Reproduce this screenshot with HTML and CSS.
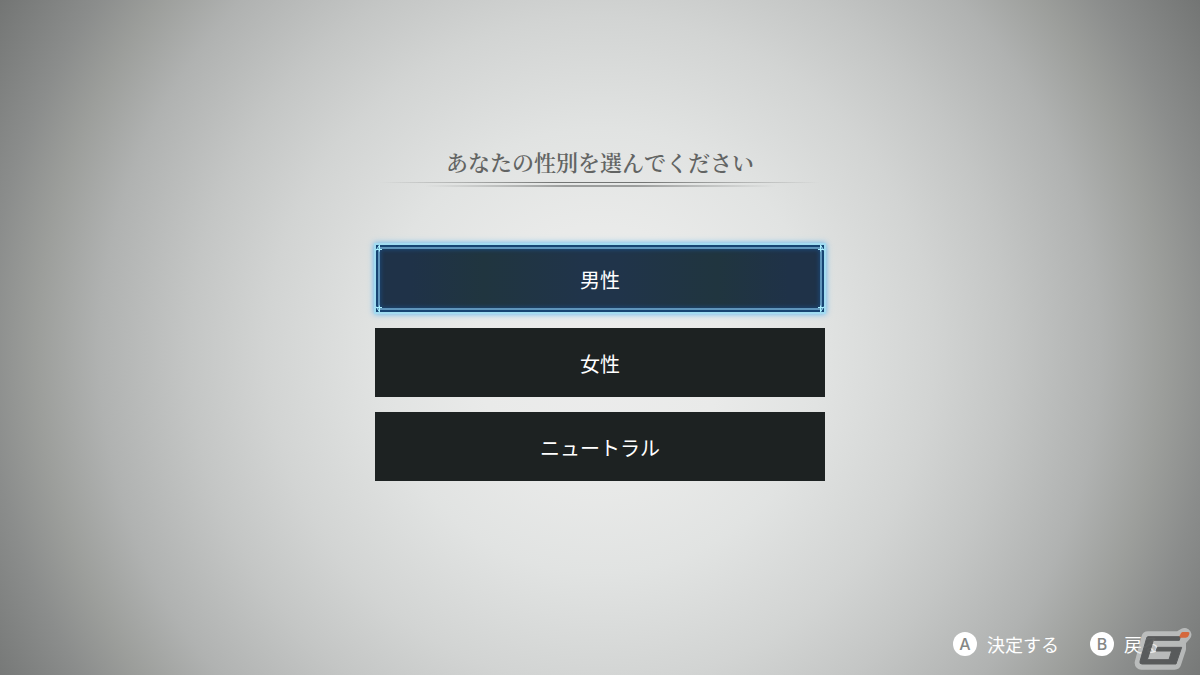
FILE: index.html
```html
<!doctype html>
<html lang="ja">
  <head>
    <meta charset="utf-8">
    <title>性別選択</title>
    <link rel="stylesheet" href="styles.css">
  </head>
  <body>
    <main id="select">
      <h1>あなたの性別を選んでください</h1>
      <div class="rule"></div>
      <div class="options">
        <button type="button" class="option selected">
          男性
          <svg class="corner tl" viewBox="0 0 8 8"><path d="M1 6.5L4.5 1V7.5M1 5.5H7"/></svg>
          <svg class="corner tr" viewBox="0 0 8 8"><path d="M1 6.5L4.5 1V7.5M1 5.5H7"/></svg>
          <svg class="corner bl" viewBox="0 0 8 8"><path d="M1 6.5L4.5 1V7.5M1 5.5H7"/></svg>
          <svg class="corner br" viewBox="0 0 8 8"><path d="M1 6.5L4.5 1V7.5M1 5.5H7"/></svg>
        </button>
        <button type="button" class="option">女性</button>
        <button type="button" class="option">ニュートラル</button>
      </div>
    </main>
    <footer>
      <button type="button" class="hint"><span class="key">A</span>決定する</button>
      <button type="button" class="hint"><span class="key">B</span>戻る</button>
    </footer>
    <svg class="mark" viewBox="0 0 240 165">
      <g opacity=".6">
        <path class="plate" d="M84 54H176L194 44L178 62V86L164 129H64z"/>
      </g>
      <path class="letter" d="M84 50H181L178 61H100L82 119H147L155 93H108L112 82H185L168 132H66Q58 132 60 124L80 54Q81 50 84 50z"/>
      <path class="dot" d="M188 36H204Q210 36 208 42L205 49Q203 53 197 53H184Q177 53 179 47L182 41Q184 36 188 36z"/>
    </svg>
  </body>
</html>
```

FILE: styles.css
```css
*,*:before,*:after {
  margin: 0;
  padding: 0;
  box-sizing: border-box;
}

body {
  position: relative;
  display: flex;
  flex-direction: column;
  min-height: 100vh;
  overflow: hidden;
  background: radial-gradient(circle farthest-corner at 50% 52%, #ececec 0%, #e9eae9 18%, #e1e3e2 32%, #d2d4d3 48%, #c4c6c5 59%, #b0b2b1 72%, #9c9e9b 81%, #8b8d8c 88%, #737574 100%);
  color: #fff;
  font-family: "Noto Sans CJK JP", sans-serif;
}

button {
  border: 0;
  background: none;
  color: inherit;
  font: inherit;
}

#select {
  flex: 1;
  display: flex;
  flex-direction: column;
  align-items: center;
  padding-top: 145px;
}

#select h1 {
  color: #626463;
  font-family: "Noto Serif CJK JP", "Noto Sans CJK JP", serif;
  font-size: 22px;
  font-weight: 600;
  line-height: 34px;
}

/* double line fading out at both ends */
.rule {
  width: 440px;
  height: 5px;
  margin: 3px 0 57px;
  background:
    linear-gradient(90deg, transparent, #737574 40%, #737574 60%, transparent) center top / 100% 1px no-repeat,
    linear-gradient(90deg, transparent, #9b9d9c 40%, #9b9d9c 60%, transparent) center bottom / 80% 2px no-repeat;
}

.options {
  display: grid;
  gap: 15px;
  width: 450px;
  max-width: 100%;
}

.option {
  position: relative;
  height: 69px;
  padding-top: 2px;
  background: #1d2222;
  font-size: 20px;
  line-height: 30px;
}

.option.selected {
  background: linear-gradient(90deg, #1f3248 8%, #20353f 24%, #20344a 46%, #20344a 54%, #20353f 76%, #1f3248 92%);
  box-shadow:
    0 0 0 1px #a5dcf2,
    0 0 6px 1px #5cb5ef,
    inset 0 0 0 1px #9fdcf0,
    inset 0 0 0 3px #164473,
    inset 0 0 0 5px #5f95bb,
    inset 0 0 4px 6px #1c4774;
}

.corner {
  position: absolute;
  width: 8px;
  height: 8px;
  fill: none;
  stroke: #a8f0ff;
}

.tl { top: 0; left: 0; }
.tr { top: 0; right: 0; transform: scaleX(-1); }
.bl { bottom: 0; left: 0; transform: scaleY(-1); }
.br { bottom: 0; right: 0; transform: scale(-1); }

footer {
  display: flex;
  justify-content: flex-end;
  gap: 31px;
  padding: 0 40px 19px;
}

.hint {
  display: flex;
  align-items: center;
  gap: 10px;
  font-size: 18px;
  line-height: 24px;
}

.key {
  width: 24px;
  height: 24px;
  border-radius: 50%;
  background: #fff;
  color: #858786;
  font-family: Inter, sans-serif;
  font-size: 16px;
  font-weight: 500;
  line-height: 24px;
  text-align: center;
}

.mark {
  position: absolute;
  right: 0;
  bottom: 0;
  width: 80px;
  height: 55px;
  stroke-linejoin: round;
}

.plate {
  fill: #dcdede;
  stroke: #dcdede;
  stroke-width: 40;
}

.letter {
  fill: #4c4e4f;
  stroke: #4c4e4f;
  stroke-width: 3;
  opacity: .88;
}

.dot {
  fill: #d5683c;
}
```
